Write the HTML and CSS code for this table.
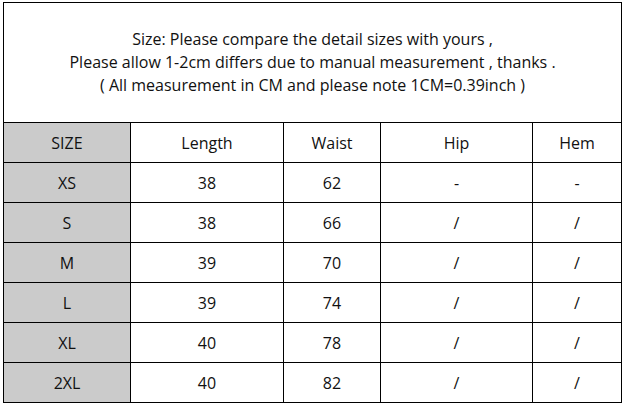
FILE: index.html
```html
<!DOCTYPE html>
<html>
<head>
<meta charset="utf-8">
<link rel="stylesheet" href="styles.css">
</head>
<body>
<table class="chart">
  <colgroup>
    <col class="c1"><col class="c2"><col class="c3"><col class="c4"><col class="c5">
  </colgroup>
  <tr class="note">
    <td colspan="5">Size: Please compare the detail sizes with yours ,<br>Please allow 1-2cm differs due to manual measurement , thanks .<br>( All measurement in CM and please note 1CM=0.39inch )</td>
  </tr>
  <tr><td class="sz">SIZE</td><td>Length</td><td>Waist</td><td>Hip</td><td>Hem</td></tr>
  <tr><td class="sz">XS</td><td>38</td><td>62</td><td>-</td><td>-</td></tr>
  <tr><td class="sz">S</td><td>38</td><td>66</td><td>/</td><td>/</td></tr>
  <tr><td class="sz">M</td><td>39</td><td>70</td><td>/</td><td>/</td></tr>
  <tr><td class="sz">L</td><td>39</td><td>74</td><td>/</td><td>/</td></tr>
  <tr><td class="sz">XL</td><td>40</td><td>78</td><td>/</td><td>/</td></tr>
  <tr><td class="sz">2XL</td><td>40</td><td>82</td><td>/</td><td>/</td></tr>
</table>
</body>
</html>
```
FILE: styles.css
```css
html, body {
  margin: 0;
  background: #ffffff;
}
body {
  padding: 2px 0 0 3px;
  font-family: "Open Sans", "Noto Sans", sans-serif;
  font-size: 16px;
  color: #111;
}
.chart {
  border-collapse: collapse;
  table-layout: fixed;
  width: 618px;
}
.c1 { width: 127px; }
.c2 { width: 153px; }
.c3 { width: 97px; }
.c4 { width: 152px; }
.c5 { width: 89px; }
.chart td {
  border: 1.5px solid #000;
  text-align: center;
  vertical-align: middle;
  height: 40px;
  padding: 0;
  box-sizing: border-box;
}
.note td {
  height: 120px;
  line-height: 23px;
}
.chart td.sz {
  background: #cbcbcb;
}
```
